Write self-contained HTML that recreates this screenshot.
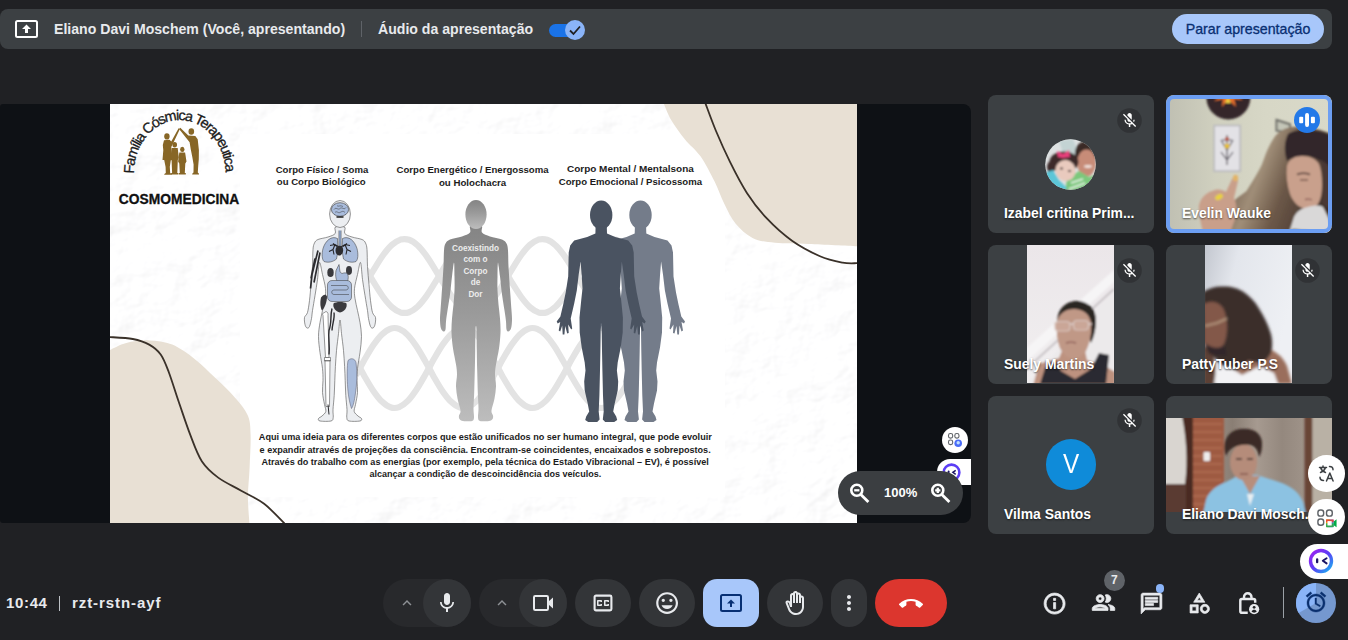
<!DOCTYPE html>
<html lang="pt-BR">
<head>
<meta charset="utf-8">
<title>Meet - rzt-rstn-ayf</title>
<style>
*{box-sizing:border-box;margin:0;padding:0}
html,body{width:1348px;height:640px;overflow:hidden;background:#202124}
body{position:relative;font-family:"Liberation Sans",sans-serif;color:#e8eaed}
.abs{position:absolute}
/* top bar */
#topbar{left:0;top:9px;width:1332px;height:40px;background:#3c4043;border-radius:8px}
#topbar .t{position:absolute;top:0;height:40px;line-height:41px;font-size:14.1px;font-weight:bold;color:#e8eaed;white-space:nowrap}
#stopbtn{left:1172px;top:14px;width:152px;height:30px;border-radius:15px;background:#a8c7fa;color:#082f72;font-size:14.2px;-webkit-text-stroke:.3px #082f72;line-height:30px;text-align:center;white-space:nowrap}
/* presentation */
#pres{left:0;top:104px;width:971px;height:419px;background:#0e1115;border-radius:3px 8px 8px 3px;overflow:hidden}
/* tiles */
.tile{position:absolute;width:166px;height:138.33px;background:#3c4043;border-radius:8px;overflow:hidden}
.tile .nm{position:absolute;left:16px;bottom:12px;line-height:16px;font-size:13.9px;font-weight:bold;color:#fff;white-space:nowrap;text-shadow:0 1px 2px rgba(0,0,0,.6)}
.tile .mute{position:absolute;right:12.5px;top:12.5px}
/* bottom bar */
.btn{position:absolute;top:579px;height:48px;border-radius:24px;background:#333538}
.grp{position:absolute;top:579px;height:48px;border-radius:24px;background:#28292c}
#clock{left:6px;top:593.3px;font-size:15px;letter-spacing:.65px;font-weight:bold;color:#e8eaed;line-height:20px;white-space:nowrap}
</style>
</head>
<body>

<!-- TOP BAR -->
<div id="topbar" class="abs">
  <svg class="abs" style="left:15px;top:11px" width="24" height="18" viewBox="0 0 24 18"><rect x="1" y="1" width="21" height="16" rx="1.5" fill="none" stroke="#fff" stroke-width="2"/><path d="M11.5 4.5 L7 9 H10 V13 H13 V9 H16 Z" fill="#fff"/></svg>
  <span class="t" id="t1" style="left:54px">Eliano Davi Moschem (Você, apresentando)</span>
  <div class="abs" style="left:361px;top:12px;width:1px;height:16px;background:#5f6368"></div>
  <span class="t" id="t2" style="left:378px">Áudio da apresentação</span>
  <div class="abs" style="left:549px;top:15px;width:34px;height:13px;border-radius:7px;background:#1a73e8"></div>
  <div class="abs" style="left:565px;top:11px;width:20px;height:20px;border-radius:10px;background:#8ab4f8"></div>
  <svg class="abs" style="left:565px;top:11px" width="20" height="20" viewBox="0 0 20 20"><path d="M5 10.5 L8.5 14 L15 6.5" fill="none" stroke="#202124" stroke-width="1.8"/></svg>
</div>
<div id="stopbtn" class="abs">Parar apresentação</div>

<!-- PRESENTATION -->
<div id="pres" class="abs">
<svg id="slide" class="abs" style="left:0;top:0" width="971" height="419" viewBox="0 104 971 419" font-family="'Liberation Sans',sans-serif">
<!--slide_bg_START-->
<defs>
<linearGradient id="gbody" x1="0" y1="0" x2="0" y2="1"><stop offset="0" stop-color="#848484"/><stop offset=".45" stop-color="#9a9a9a"/><stop offset="1" stop-color="#bdbdbd"/></linearGradient>
<filter id="pf" x="-20%" y="-20%" width="140%" height="140%"><feGaussianBlur stdDeviation="9"/></filter>
<clipPath id="slc"><rect x="110" y="104" width="747" height="419"/></clipPath>
<g id="man"><ellipse cx="0" cy="14.5" rx="11.2" ry="14.5"/><path d="M-5.6,26.0L-5.8,33.0L-14.0,36.5L-27.0,40.0L-31.0,45.0L-32.5,52.0L-33.0,76.0L-35.5,92.0L-38.0,104.0L-40.8,116.0L-44.5,121.0L-43.5,123.0L-41.0,121.5L-42.5,130.0L-41.0,131.0L-39.0,125.0L-38.5,134.0L-36.8,134.0L-36.0,125.5L-34.0,133.0L-32.5,132.5L-33.0,124.0L-30.0,129.0L-29.0,128.0L-30.5,118.0L-27.0,103.0L-24.4,90.0L-22.5,74.0L-20.6,61.0L-19.5,75.0L-18.7,88.0L-20.0,100.0L-21.7,117.0L-21.5,132.0L-19.5,147.0L-16.5,162.0L-15.7,170.0L-17.0,181.0L-16.5,190.0L-13.5,203.0L-12.0,211.0L-15.0,216.0L-16.0,219.5L-13.0,221.5L-4.0,221.5L-1.6,219.0L-2.5,211.0L-1.8,195.0L-1.2,170.0L-0.8,150.0L-0.4,123.0L0.4,123.0L0.8,150.0L1.2,170.0L1.8,195.0L2.5,211.0L1.6,219.0L4.0,221.5L13.0,221.5L16.0,219.5L15.0,216.0L12.0,211.0L13.5,203.0L16.5,190.0L17.0,181.0L15.7,170.0L16.5,162.0L19.5,147.0L21.5,132.0L21.7,117.0L20.0,100.0L18.7,88.0L19.5,75.0L20.6,61.0L22.5,74.0L24.4,90.0L27.0,103.0L30.5,118.0L29.0,128.0L30.0,129.0L33.0,124.0L32.5,132.5L34.0,133.0L36.0,125.5L36.8,134.0L38.5,134.0L39.0,125.0L41.0,131.0L42.5,130.0L41.0,121.5L43.5,123.0L44.5,121.0L40.8,116.0L38.0,104.0L35.5,92.0L33.0,76.0L32.5,52.0L31.0,45.0L27.0,40.0L14.0,36.5L5.8,33.0L5.6,26.0Z"/></g>
</defs>
<g clip-path="url(#slc)">
<rect x="110" y="104" width="747" height="419" fill="#fcfcfc"/>
<filter id="paper" x="0" y="0" width="100%" height="100%"><feTurbulence type="fractalNoise" baseFrequency="0.022 0.028" numOctaves="4" seed="7" result="n"/><feDiffuseLighting in="n" lighting-color="#ffffff" surfaceScale="2.6" diffuseConstant="1.18"><feDistantLight azimuth="40" elevation="58"/></feDiffuseLighting><feColorMatrix type="matrix" values=".5 0 0 0 .5  0 .5 0 0 .5  0 0 .5 0 .505  0 0 0 1 0"/></filter>
<rect x="110" y="104" width="747" height="419" fill="#fff" filter="url(#paper)"/>
<rect x="240" y="134" width="485" height="363" fill="#fff"/>
<path d="M663.9,104.0C665.1,106.6 667.5,113.8 671.0,119.7C674.5,125.6 680.1,133.3 685.0,139.4C689.9,145.5 695.6,149.3 700.5,156.3C705.4,163.3 710.6,173.6 714.6,181.6C718.6,189.6 720.9,197.1 724.4,204.1C727.9,211.1 731.0,218.2 735.7,223.8C740.4,229.4 746.0,234.7 752.5,237.9C759.0,241.1 765.6,241.8 775.0,242.8C784.4,243.8 795.1,243.4 808.8,244.0C822.5,244.6 849.0,245.9 857.0,246.3L857,104Z" fill="#e8e0d4"/>
<path d="M110.0,350.0C112.7,348.8 119.8,344.6 126.3,343.0C132.8,341.4 141.5,340.1 149.2,340.4C156.8,340.7 164.5,341.4 172.2,344.6C179.9,347.8 188.1,353.9 195.2,359.4C202.3,364.9 208.3,371.2 214.9,377.5C221.5,383.8 229.1,390.9 234.6,397.2C240.1,403.5 245.0,408.9 247.7,415.2C250.4,421.5 250.3,426.1 250.6,434.9C250.9,443.6 250.0,457.3 249.6,467.7C249.2,478.1 247.9,488.1 247.9,497.3C247.9,506.5 249.2,518.6 249.4,522.9L110,523Z" fill="#e8e0d4"/>
<path d="M705.3,103.0C707.1,107.7 711.9,121.2 716.0,131.0C720.1,140.8 724.9,151.6 730.0,161.9C735.1,172.2 740.8,183.5 746.9,192.9C753.0,202.3 759.1,210.2 766.6,218.2C774.1,226.2 783.1,234.4 792.0,240.7C800.9,247.0 811.6,252.5 820.0,256.2C828.4,259.9 836.4,261.4 842.6,262.6C848.8,263.8 854.6,263.1 857.0,263.2" fill="none" stroke="#3a3129" stroke-width="1.8"/>
<path d="M109.0,337.0C113.0,337.3 126.1,337.7 132.8,339.0C139.5,340.3 144.5,342.0 149.2,344.6C153.8,347.2 157.4,349.9 160.7,354.5C164.0,359.1 165.9,364.6 168.9,372.5C171.9,380.4 175.2,391.6 178.8,402.0C182.4,412.4 186.5,425.0 190.3,434.9C194.1,444.8 197.2,454.1 201.8,461.2C206.5,468.3 211.6,472.7 218.2,477.6C224.8,482.5 233.5,486.3 241.2,490.7C248.8,495.1 256.9,498.3 264.1,503.8C271.3,509.3 281.1,520.2 284.5,523.5" fill="none" stroke="#3a3129" stroke-width="1.8"/>
<g fill="none" stroke="#e3e3e3" stroke-width="6.2">
<path d="M366.0,269.3C367.4,271.7 371.8,279.1 374.6,283.7C377.5,288.3 380.4,293.1 383.2,297.0C386.1,300.9 389.0,304.5 391.9,307.1C394.8,309.6 397.6,311.5 400.5,312.4C403.4,313.2 406.2,313.2 409.1,312.2C412.0,311.2 414.9,309.1 417.8,306.5C420.6,303.8 423.5,300.1 426.4,296.1C429.2,292.2 432.1,287.3 435.0,282.7C437.9,278.1 440.8,272.9 443.6,268.3C446.5,263.7 449.4,258.9 452.2,255.0C455.1,251.1 458.0,247.5 460.9,244.9C463.8,242.4 466.6,240.5 469.5,239.6C472.4,238.8 475.2,238.8 478.1,239.8C481.0,240.8 483.9,242.9 486.8,245.5C489.6,248.2 492.5,251.9 495.4,255.9C498.2,259.8 501.1,264.7 504.0,269.3C506.9,273.9 509.8,279.1 512.6,283.7C515.5,288.3 518.4,293.1 521.2,297.0C524.1,300.9 527.0,304.5 529.9,307.1C532.8,309.6 535.6,311.5 538.5,312.4C541.4,313.2 544.2,313.2 547.1,312.2C550.0,311.2 552.9,309.1 555.8,306.5C558.6,303.8 561.5,300.1 564.4,296.1C567.2,292.2 570.1,287.3 573.0,282.7C575.9,278.1 578.8,272.9 581.6,268.3C584.5,263.7 587.4,258.9 590.2,255.0C593.1,251.1 596.0,247.5 598.9,244.9C601.8,242.4 604.6,240.5 607.5,239.6C610.4,238.8 613.2,238.8 616.1,239.8C619.0,240.8 621.9,242.9 624.8,245.5C627.6,248.2 630.5,251.9 633.4,255.9C636.2,259.8 640.6,267.1 642.0,269.3"/>
<path d="M366.0,282.7C367.4,280.3 371.8,272.9 374.6,268.3C377.5,263.7 380.4,258.9 383.2,255.0C386.1,251.1 389.0,247.5 391.9,244.9C394.8,242.4 397.6,240.5 400.5,239.6C403.4,238.8 406.2,238.8 409.1,239.8C412.0,240.8 414.9,242.9 417.8,245.5C420.6,248.2 423.5,251.9 426.4,255.9C429.2,259.8 432.1,264.7 435.0,269.3C437.9,273.9 440.8,279.1 443.6,283.7C446.5,288.3 449.4,293.1 452.2,297.0C455.1,300.9 458.0,304.5 460.9,307.1C463.8,309.6 466.6,311.5 469.5,312.4C472.4,313.2 475.2,313.2 478.1,312.2C481.0,311.2 483.9,309.1 486.8,306.5C489.6,303.8 492.5,300.1 495.4,296.1C498.2,292.2 501.1,287.3 504.0,282.7C506.9,278.1 509.8,272.9 512.6,268.3C515.5,263.7 518.4,258.9 521.2,255.0C524.1,251.1 527.0,247.5 529.9,244.9C532.8,242.4 535.6,240.5 538.5,239.6C541.4,238.8 544.2,238.8 547.1,239.8C550.0,240.8 552.9,242.9 555.8,245.5C558.6,248.2 561.5,251.9 564.4,255.9C567.2,259.8 570.1,264.7 573.0,269.3C575.9,273.9 578.8,279.1 581.6,283.7C584.5,288.3 587.4,293.1 590.2,297.0C593.1,300.9 596.0,304.5 598.9,307.1C601.8,309.6 604.6,311.5 607.5,312.4C610.4,313.2 613.2,313.2 616.1,312.2C619.0,311.2 621.9,309.1 624.8,306.5C627.6,303.8 630.5,300.1 633.4,296.1C636.2,292.2 640.6,284.9 642.0,282.7"/>
<path d="M356.0,360.8C357.4,363.4 361.8,371.4 364.6,376.4C367.5,381.4 370.4,386.5 373.2,390.7C376.1,394.9 379.0,398.8 381.9,401.6C384.8,404.3 387.6,406.4 390.5,407.3C393.4,408.3 396.2,408.2 399.1,407.1C402.0,406.0 404.9,403.8 407.8,400.9C410.6,398.0 413.5,394.0 416.4,389.7C419.2,385.5 422.1,380.3 425.0,375.2C427.9,370.2 430.8,364.6 433.6,359.6C436.5,354.6 439.4,349.5 442.2,345.3C445.1,341.1 448.0,337.2 450.9,334.4C453.8,331.7 456.6,329.6 459.5,328.7C462.4,327.7 465.2,327.8 468.1,328.9C471.0,330.0 473.9,332.2 476.8,335.1C479.6,338.0 482.5,342.0 485.4,346.3C488.2,350.5 491.1,355.7 494.0,360.8C496.9,365.8 499.8,371.4 502.6,376.4C505.5,381.4 508.4,386.5 511.2,390.7C514.1,394.9 517.0,398.8 519.9,401.6C522.8,404.3 525.6,406.4 528.5,407.3C531.4,408.3 534.2,408.2 537.1,407.1C540.0,406.0 542.9,403.8 545.8,400.9C548.6,398.0 551.5,394.0 554.4,389.7C557.2,385.5 560.1,380.3 563.0,375.2C565.9,370.2 568.8,364.6 571.6,359.6C574.5,354.6 577.4,349.5 580.2,345.3C583.1,341.1 586.0,337.2 588.9,334.4C591.8,331.7 594.6,329.6 597.5,328.7C600.4,327.7 603.2,327.8 606.1,328.9C609.0,330.0 611.9,332.2 614.8,335.1C617.6,338.0 620.5,342.0 623.4,346.3C626.2,350.5 630.6,358.3 632.0,360.8"/>
<path d="M356.0,375.2C357.4,372.6 361.8,364.6 364.6,359.6C367.5,354.6 370.4,349.5 373.2,345.3C376.1,341.1 379.0,337.2 381.9,334.4C384.8,331.7 387.6,329.6 390.5,328.7C393.4,327.7 396.2,327.8 399.1,328.9C402.0,330.0 404.9,332.2 407.8,335.1C410.6,338.0 413.5,342.0 416.4,346.3C419.2,350.5 422.1,355.7 425.0,360.8C427.9,365.8 430.8,371.4 433.6,376.4C436.5,381.4 439.4,386.5 442.2,390.7C445.1,394.9 448.0,398.8 450.9,401.6C453.8,404.3 456.6,406.4 459.5,407.3C462.4,408.3 465.2,408.2 468.1,407.1C471.0,406.0 473.9,403.8 476.8,400.9C479.6,398.0 482.5,394.0 485.4,389.7C488.2,385.5 491.1,380.3 494.0,375.2C496.9,370.2 499.8,364.6 502.6,359.6C505.5,354.6 508.4,349.5 511.2,345.3C514.1,341.1 517.0,337.2 519.9,334.4C522.8,331.7 525.6,329.6 528.5,328.7C531.4,327.7 534.2,327.8 537.1,328.9C540.0,330.0 542.9,332.2 545.8,335.1C548.6,338.0 551.5,342.0 554.4,346.3C557.2,350.5 560.1,355.7 563.0,360.8C565.9,365.8 568.8,371.4 571.6,376.4C574.5,381.4 577.4,386.5 580.2,390.7C583.1,394.9 586.0,398.8 588.9,401.6C591.8,404.3 594.6,406.4 597.5,407.3C600.4,408.3 603.2,408.2 606.1,407.1C609.0,406.0 611.9,403.8 614.8,400.9C617.6,398.0 620.5,394.0 623.4,389.7C626.2,385.5 630.6,377.7 632.0,375.2"/>
</g>
</g>
<!--slide_bg_END-->
<!--slide_fg_START-->
<g transform="translate(340,200.5)">
<g fill="#eceef1" stroke="#5c5c5c" stroke-width=".65" stroke-linejoin="round">
<path d="M-4.6,26.5C-6.2,27.6 -3.6,31.3 -4.8,33.0C-6.0,34.7 -9.1,35.5 -12.0,36.5C-14.9,37.5 -19.8,38.0 -22.0,39.0C-24.2,40.0 -24.7,40.8 -25.5,42.5C-26.3,44.2 -26.7,45.1 -27.0,49.0C-27.3,52.9 -27.2,60.2 -27.5,66.0C-27.8,71.8 -28.5,78.3 -29.0,84.0C-29.5,89.7 -29.9,95.3 -30.5,100.0C-31.1,104.7 -31.7,109.2 -32.5,112.0C-33.3,114.8 -35.1,115.0 -35.5,117.0C-35.9,119.0 -35.4,122.2 -35.0,124.0C-34.6,125.8 -33.8,127.2 -33.0,127.5C-32.2,127.8 -31.2,127.6 -30.5,126.0C-29.8,124.4 -29.0,120.7 -28.5,118.0C-28.0,115.3 -28.1,113.8 -27.5,110.0C-26.9,106.2 -25.8,100.2 -25.0,95.0C-24.2,89.8 -23.2,84.5 -22.5,79.0C-21.8,73.5 -21.3,62.8 -20.5,62.0C-19.7,61.2 -18.5,69.7 -17.5,74.0C-16.5,78.3 -14.9,84.0 -14.5,88.0C-14.1,92.0 -14.5,94.3 -15.0,98.0C-15.5,101.7 -16.7,106.0 -17.5,110.0C-18.3,114.0 -19.3,117.7 -20.0,122.0C-20.7,126.3 -21.5,131.0 -21.5,136.0C-21.5,141.0 -20.7,146.7 -20.0,152.0C-19.3,157.3 -18.0,163.3 -17.5,168.0C-17.0,172.7 -17.0,176.0 -17.0,180.0C-17.0,184.0 -17.8,188.0 -17.5,192.0C-17.2,196.0 -16.1,200.8 -15.5,204.0C-14.9,207.2 -13.8,209.1 -14.2,211.0C-14.6,212.9 -16.8,214.3 -18.0,215.5C-19.2,216.7 -21.2,217.2 -21.5,218.0C-21.8,218.8 -22.1,220.1 -20.0,220.5C-17.9,220.9 -11.2,221.1 -9.0,220.5C-6.8,219.9 -7.1,218.9 -6.8,217.0C-6.5,215.1 -7.2,212.7 -7.0,209.0C-6.8,205.3 -6.1,199.8 -5.8,195.0C-5.5,190.2 -5.4,184.8 -5.2,180.0C-5.0,175.2 -4.9,171.0 -4.6,166.0C-4.3,161.0 -4.0,155.5 -3.5,150.0C-3.0,144.5 -2.0,137.8 -1.5,133.0C-1.0,128.2 -0.7,123.0 -0.4,121.0C-0.1,119.0 0.1,119.0 0.4,121.0C0.7,123.0 1.0,128.2 1.5,133.0C2.0,137.8 3.0,144.5 3.5,150.0C4.0,155.5 4.3,161.0 4.6,166.0C4.9,171.0 5.0,175.2 5.2,180.0C5.4,184.8 5.5,190.2 5.8,195.0C6.1,199.8 6.8,205.3 7.0,209.0C7.2,212.7 6.5,215.1 6.8,217.0C7.1,218.9 6.8,219.9 9.0,220.5C11.2,221.1 17.9,220.9 20.0,220.5C22.1,220.1 21.8,218.8 21.5,218.0C21.2,217.2 19.2,216.7 18.0,215.5C16.8,214.3 14.6,212.9 14.2,211.0C13.8,209.1 14.9,207.2 15.5,204.0C16.1,200.8 17.2,196.0 17.5,192.0C17.8,188.0 17.0,184.0 17.0,180.0C17.0,176.0 17.0,172.7 17.5,168.0C18.0,163.3 19.3,157.3 20.0,152.0C20.7,146.7 21.5,141.0 21.5,136.0C21.5,131.0 20.7,126.3 20.0,122.0C19.3,117.7 18.3,114.0 17.5,110.0C16.7,106.0 15.5,101.7 15.0,98.0C14.5,94.3 14.1,92.0 14.5,88.0C14.9,84.0 16.5,78.3 17.5,74.0C18.5,69.7 19.7,61.2 20.5,62.0C21.3,62.8 21.8,73.5 22.5,79.0C23.2,84.5 24.2,89.8 25.0,95.0C25.8,100.2 26.9,106.2 27.5,110.0C28.1,113.8 28.0,115.3 28.5,118.0C29.0,120.7 29.8,124.4 30.5,126.0C31.2,127.6 32.2,127.8 33.0,127.5C33.8,127.2 34.6,125.8 35.0,124.0C35.4,122.2 35.9,119.0 35.5,117.0C35.1,115.0 33.3,114.8 32.5,112.0C31.7,109.2 31.1,104.7 30.5,100.0C29.9,95.3 29.5,89.7 29.0,84.0C28.5,78.3 27.8,71.8 27.5,66.0C27.2,60.2 27.3,52.9 27.0,49.0C26.7,45.1 26.3,44.2 25.5,42.5C24.7,40.8 24.2,40.0 22.0,39.0C19.8,38.0 14.9,37.5 12.0,36.5C9.1,35.5 6.0,34.7 4.8,33.0C3.6,31.3 6.2,27.6 4.6,26.5C3.0,25.4 -3.0,25.4 -4.6,26.5Z"/>
<ellipse cx="0" cy="13.5" rx="10.4" ry="13.5"/>
</g>
<ellipse cx="0" cy="9" rx="8.6" ry="6.8" fill="#a9bcdc" stroke="#333" stroke-width=".6"/>
<path d="M-6,9c2,-3 4,1 6,-1s4,2 6,-1M-5,12c2,-2 3,1 5,0s3,-2 5,0M-3,5c1,2 3,-1 6,1" fill="none" stroke="#333" stroke-width=".5"/>
<path d="M-3.5,16.5h7" stroke="#222" stroke-width="1.6"/>
<path d="M0,30V50" stroke="#8fa5c8" stroke-width="2.2"/><path d="M-1.2,30V48M1.2,30V48" stroke="#333" stroke-width=".4"/>
<path d="M-2.5,38c-6,-3 -12,2 -14.5,10c-1.5,6 -1,11 1,13c4,1.5 9,0.5 12.5,-2.5c1.5,-6 1.5,-13 1,-18.500z" fill="#a9bcdc" stroke="#333" stroke-width=".5"/>
<path d="M2.500,38c6,-3 12,2 14.500,10c1.500,6 1,11 -1,13c-4,1.500 -9,0.500 -12.500,-2.500c-1.500,-6 -1.500,-13 -1,-18.500z" fill="#a9bcdc" stroke="#333" stroke-width=".5"/>
<path d="M0,47l-5,-3l-5,1M-5,44l-2,5l-4,2M-7,49l1,5M0,47l5,-3l5,1M5,44l2,5l4,2M7,49l-1,5M-3,46l-4,-3M3,46l4,-3" fill="none" stroke="#26262a" stroke-width="1.1"/>
<path d="M-3,46c3,-2 7,0 6,5c-1,4 -4,5 -6,3c-2,-2 -2,-6 0,-8z" fill="#2c2c30"/>
<ellipse cx="-9.500" cy="72" rx="3.200" ry="4.600" fill="#3a3a3e"/><ellipse cx="9" cy="70" rx="3" ry="4.400" fill="#3a3a3e"/>
<path d="M-1,64c1,4 0,8 3,9c5,-2 7,1 6,6c-1,4 -5,6 -9,4c-3,-2 -4,-8 -3,-13z" fill="#a9bcdc" stroke="#333" stroke-width=".5"/>
<rect x="-12.500" y="80" width="24" height="21" rx="4.500" fill="#a9bcdc" stroke="#333" stroke-width=".5"/>
<path d="M-9,85h15c3,0 3,4.500 0,4.500h-12c-3,0 -3,4.500 0,4.500h15" fill="none" stroke="#333" stroke-width=".5"/>
<path d="M-6.500,103c2,-2 11,-2 13,0c1,4 -2,8 -6.500,9c-4.500,-1 -7.500,-5 -6.500,-9z" fill="#3a3a3e"/>
<path d="M-19,97c2,-3 5,-4 6,-1c0,5 -2,11 -5,14c-2,-3 -2,-9 -1,-13z" fill="#3a3a3e"/>
<path d="M-22,50c-2,8 -4,16 -6,24l-1.500,14M-25,58l-4,20M-20,52l-6,30" fill="none" stroke="#2c2c30" stroke-width="1.700"/>
<path d="M-15.500,112c2,-2 4,0 3.500,3l1,42h-3.500l-2.500,-42c-1,-1 0,-3 1.500,-3z" fill="#fff" stroke="#333" stroke-width=".5"/>
<path d="M-15,160h5l-0.500,46h-3.500zM-15.500,157h6v3.500h-6z" fill="#fff" stroke="#333" stroke-width=".5"/>
<path d="M-8,108c-2,8 0,14 -3,22c-1,8 1,14 0,24M-6,112c1,6 -2,12 -2,18" fill="none" stroke="#2c2c30" stroke-width="1.400"/>
<path d="M-12,204l1,10" stroke="#2c2c30" stroke-width="1"/>
<path d="M8,160c3,-3 7,-2 8,2c1.500,10 1,22 -1,34c-1,6 -2,10 -3.500,12c-2,-6 -3.500,-14 -4,-24c-0.500,-8 -0.500,-18 0.500,-24z" fill="#a9bcdc" stroke="#556" stroke-width=".5"/>
</g>
<g transform="translate(476,200.5)" fill="url(#gbody)">
<path d="M-5.5,25.0C-7.4,26.2 -4.6,30.2 -6.0,32.0C-7.4,33.8 -10.7,34.8 -14.0,36.0C-17.3,37.2 -23.2,37.8 -26.0,39.0C-28.8,40.2 -29.5,41.2 -30.5,43.0C-31.5,44.8 -31.7,46.2 -32.0,50.0C-32.3,53.8 -32.2,60.7 -32.5,66.0C-32.8,71.3 -33.2,77.0 -33.5,82.0C-33.8,87.0 -34.2,91.3 -34.5,96.0C-34.8,100.7 -35.2,106.0 -35.5,110.0C-35.8,114.0 -36.1,117.0 -36.0,120.0C-35.9,123.0 -35.6,126.2 -35.0,128.0C-34.4,129.8 -33.2,130.8 -32.5,131.0C-31.8,131.2 -30.9,130.7 -30.5,129.0C-30.1,127.3 -30.3,124.2 -30.0,121.0C-29.7,117.8 -29.2,114.5 -28.5,110.0C-27.8,105.5 -26.8,99.7 -26.0,94.0C-25.2,88.3 -24.7,81.3 -24.0,76.0C-23.3,70.7 -22.4,62.0 -22.0,62.0C-21.6,62.0 -21.6,71.3 -21.5,76.0C-21.4,80.7 -21.3,85.3 -21.5,90.0C-21.7,94.7 -22.1,99.3 -22.5,104.0C-22.9,108.7 -23.7,113.3 -24.0,118.0C-24.3,122.7 -24.7,127.0 -24.5,132.0C-24.3,137.0 -23.8,142.7 -23.0,148.0C-22.2,153.3 -20.7,159.7 -20.0,164.0C-19.3,168.3 -19.0,170.3 -19.0,174.0C-19.0,177.7 -20.1,182.0 -20.0,186.0C-19.9,190.0 -19.2,194.0 -18.5,198.0C-17.8,202.0 -15.8,207.2 -15.5,210.0C-15.2,212.8 -16.8,213.6 -17.0,215.0C-17.2,216.4 -17.2,217.6 -16.5,218.5C-15.8,219.4 -15.1,220.2 -13.0,220.5C-10.9,220.8 -5.8,221.1 -4.0,220.5C-2.2,219.9 -2.2,219.1 -2.0,217.0C-1.8,214.9 -2.5,212.2 -2.5,208.0C-2.5,203.8 -2.0,198.3 -1.8,192.0C-1.6,185.7 -1.4,177.0 -1.2,170.0C-1.0,163.0 -0.9,157.0 -0.8,150.0C-0.7,143.0 -0.6,131.7 -0.4,128.0C-0.2,124.3 0.2,124.3 0.4,128.0C0.6,131.7 0.7,143.0 0.8,150.0C0.9,157.0 1.0,163.0 1.2,170.0C1.4,177.0 1.6,185.7 1.8,192.0C2.0,198.3 2.5,203.8 2.5,208.0C2.5,212.2 1.8,214.9 2.0,217.0C2.2,219.1 2.2,219.9 4.0,220.5C5.8,221.1 10.9,220.8 13.0,220.5C15.1,220.2 15.8,219.4 16.5,218.5C17.2,217.6 17.2,216.4 17.0,215.0C16.8,213.6 15.2,212.8 15.5,210.0C15.8,207.2 17.8,202.0 18.5,198.0C19.2,194.0 19.9,190.0 20.0,186.0C20.1,182.0 19.0,177.7 19.0,174.0C19.0,170.3 19.3,168.3 20.0,164.0C20.7,159.7 22.2,153.3 23.0,148.0C23.8,142.7 24.3,137.0 24.5,132.0C24.7,127.0 24.3,122.7 24.0,118.0C23.7,113.3 22.9,108.7 22.5,104.0C22.1,99.3 21.7,94.7 21.5,90.0C21.3,85.3 21.4,80.7 21.5,76.0C21.6,71.3 21.6,62.0 22.0,62.0C22.4,62.0 23.3,70.7 24.0,76.0C24.7,81.3 25.2,88.3 26.0,94.0C26.8,99.7 27.8,105.5 28.5,110.0C29.2,114.5 29.7,117.8 30.0,121.0C30.3,124.2 30.1,127.3 30.5,129.0C30.9,130.7 31.8,131.2 32.5,131.0C33.2,130.8 34.4,129.8 35.0,128.0C35.6,126.2 35.9,123.0 36.0,120.0C36.1,117.0 35.8,114.0 35.5,110.0C35.2,106.0 34.8,100.7 34.5,96.0C34.2,91.3 33.8,87.0 33.5,82.0C33.2,77.0 32.8,71.3 32.5,66.0C32.2,60.7 32.3,53.8 32.0,50.0C31.7,46.2 31.5,44.8 30.5,43.0C29.5,41.2 28.8,40.2 26.0,39.0C23.2,37.8 17.3,37.2 14.0,36.0C10.7,34.8 7.4,33.8 6.0,32.0C4.6,30.2 7.4,26.2 5.5,25.0C3.6,23.8 -3.6,23.8 -5.5,25.0Z"/>
<ellipse cx="0" cy="14" rx="10.600" ry="14.500"/>
</g>
<g font-size="8.2" font-weight="bold" fill="#ececec" text-anchor="middle">
<text x="475.5" y="250.6">Coexistindo</text>
<text x="475.5" y="262.1">com o</text>
<text x="475.5" y="273.6">Corpo</text>
<text x="475.5" y="285.1">de</text>
<text x="475.5" y="296.6">Dor</text>
</g>
<use href="#man" x="640.5" y="200.5" fill="#747c8a"/>
<use href="#man" x="601.2" y="200.5" fill="#4a5361"/>
<g font-weight="bold" font-size="9.7" fill="#1c1c1c">
<text x="275.7" y="172.8" textLength="92.6" lengthAdjust="spacingAndGlyphs">Corpo Físico / Soma</text>
<text x="276.8" y="185.4" textLength="88.9" lengthAdjust="spacingAndGlyphs">ou Corpo Biológico</text>
<text x="396.5" y="173.2" textLength="152.1" lengthAdjust="spacingAndGlyphs">Corpo Energético / Energossoma</text>
<text x="438.9" y="186.2" textLength="67.3" lengthAdjust="spacingAndGlyphs">ou Holochacra</text>
<text x="567.0" y="172.3" textLength="126.8" lengthAdjust="spacingAndGlyphs">Corpo Mental / Mentalsona</text>
<text x="558.8" y="185.2" textLength="143.2" lengthAdjust="spacingAndGlyphs">Corpo Emocional / Psicossoma</text>
<text x="258.8" y="440.2" textLength="453.0" lengthAdjust="spacingAndGlyphs">Aqui uma ideia para os diferentes corpos que estão unificados no ser humano integral, que pode evoluir</text>
<text x="259.6" y="452.6" textLength="451.1" lengthAdjust="spacingAndGlyphs">e expandir através de projeções da consciência. Encontram-se coincidentes, encaixados e sobrepostos.</text>
<text x="261.4" y="464.9" textLength="447.4" lengthAdjust="spacingAndGlyphs">Através do trabalho com as energias (por exemplo, pela técnica do Estado Vibracional – EV), é possível</text>
<text x="369.5" y="476.9" textLength="231.7" lengthAdjust="spacingAndGlyphs">alcançar a condição de descoincidência dos veículos.</text>
</g>
<path id="arc" d="M133.8,173.8A45.8,53.600 0 0 1 225.600,173.800" fill="none"/>
<text font-size="14.4" fill="#1a1a1a" stroke="#1a1a1a" stroke-width=".3"><textPath href="#arc" textLength="155" lengthAdjust="spacing">Família Cósmica Terapeutica</textPath></text>
<text x="118.8" y="204" font-size="14.3" font-weight="bold" fill="#111" stroke="#111" stroke-width=".3" textLength="120.500" lengthAdjust="spacingAndGlyphs">COSMOMEDICINA</text>
<g fill="#876626">
<ellipse cx="166.900" cy="136.400" rx="2.700" ry="3.100"/>
<path d="M164,140.200l5.500,-0.400l1.800,1.600l7.300,-13.200l1.300,0.900l-7,14.600l-1.600,3.400l0.500,6l1.200,6.800l-2.200,0.300l-1,6.500l0.400,6.200l1.600,1v0.900h-7.500v-0.900l1.500,-1l-0.200,-6l-1.400,-6.800l-1.700,-0.200l0.800,-9.600l-0.500,-5.400z"/>
<ellipse cx="191.300" cy="131.500" rx="2.800" ry="3.300"/>
<path d="M188.300,135.600l7,0.300l2.400,3.400l1.200,10.600l-0.100,9.400l-0.600,6.600l-0.400,6.500l1.200,1.300v0.900h-6.800v-0.900l1.300,-1.200l0.100,-8l-1.300,-7.600l-1.600,-7.800l-1.100,-6.800l-10.500,-13.400l1.200,-1.100z"/>
<ellipse cx="174.700" cy="144.700" rx="2.300" ry="2.700"/><path d="M171.700,148h6l1.100,9.500l-1,2.500l-0.500,13h1v1.600h-7.200v-1.600h1l-0.500,-13l-1,-2.500z"/>
<ellipse cx="182.300" cy="149.400" rx="2.200" ry="2.600"/><path d="M179.300,152.600h5.800l1.400,9l-1.200,1.800l-0.500,9.600h1v1.600h-7v-1.600h1l-0.500,-9.600l-1.200,-1.800z"/>
</g>
<!--slide_fg_END-->
</svg>
<!--presov_START-->
<div class="abs" style="left:942px;top:323.300px;width:26px;height:26px;border-radius:50%;background:#fff"></div>
<svg class="abs" style="left:946.500px;top:328px" width="17" height="17" viewBox="0 0 17 17"><g fill="none" stroke="#5f6368" stroke-width="1.100"><rect x="1.500" y="1.500" width="4.200" height="4.600" rx="1.900"/><rect x="7.800" y="1.500" width="4.200" height="4.600" rx="1.900"/><rect x="1.500" y="8" width="4.200" height="4.600" rx="1.900"/></g><circle cx="11.200" cy="11.200" r="3.800" fill="#4a6cf7"/><circle cx="11.200" cy="10.800" r="1.700" fill="#bfe0ff"/></svg>
<div class="abs" style="left:936.500px;top:355.200px;width:40px;height:26px;border-radius:13px 0 0 0;background:#fff"></div>
<svg class="abs" style="left:941px;top:357.500px" width="21" height="21" viewBox="0 0 28 28"><circle cx="14" cy="14" r="10.500" fill="#fff" stroke="#5b3df5" stroke-width="3.400"/><rect x="9" y="11.300" width="2.300" height="5" rx="1.100" fill="#1b1464"/><path d="M19.600 11.200l-3.800 2.600 3.800 2.600" fill="none" stroke="#1b1464" stroke-width="1.900"/></svg>
<div class="abs" style="left:838px;top:367px;width:125px;height:44px;border-radius:22px;background:#3b3e41"></div>
<svg class="abs" style="left:848px;top:377px" width="24" height="24" viewBox="0 0 24 24"><circle cx="8.800" cy="9.300" r="5.500" fill="none" stroke="#fff" stroke-width="2.600"/><path d="M12.800 13.500l7.600 7.600" stroke="#fff" stroke-width="2.800"/><path d="M6.200 9.300h5.200" stroke="#fff" stroke-width="2.300"/></svg>
<div class="abs" id="zp" style="left:884px;top:380.500px;font-size:13px;font-weight:bold;color:#fff;line-height:16px;letter-spacing:0">100%</div>
<svg class="abs" style="left:929px;top:377px" width="24" height="24" viewBox="0 0 24 24"><circle cx="8.800" cy="9.300" r="5.500" fill="none" stroke="#fff" stroke-width="2.600"/><path d="M12.800 13.500l7.600 7.600" stroke="#fff" stroke-width="2.800"/><path d="M6.200 9.300h5.200M8.800 6.700v5.200" stroke="#fff" stroke-width="2.300"/></svg>
<!--presov_END-->
</div>

<!-- TILES -->
<div class="tile" id="tl1" style="left:988px;top:95px">
<!--tile1_START-->
<svg class="abs" style="left:57px;top:43.600px" width="51" height="51" viewBox="0 0 51 51">
<defs><clipPath id="avc"><circle cx="25.500" cy="25.500" r="25.300"/></clipPath><filter id="b1" x="-30%" y="-30%" width="160%" height="160%"><feGaussianBlur stdDeviation="1.100"/></filter></defs>
<g clip-path="url(#avc)"><rect width="51" height="51" fill="#dde1e2"/><g filter="url(#b1)">
<path d="M14,2l14,-2l6,16l-14,4z" fill="#c3d3d3"/>
<ellipse cx="41" cy="14" rx="11" ry="12" fill="#3b2b27"/>
<ellipse cx="41.500" cy="24" rx="9.500" ry="13.500" fill="#c78c78"/>
<ellipse cx="43" cy="27.500" rx="4" ry="1.400" fill="#f0e0da"/>
<path d="M20,52l2,-12l12,-8l10,6l6,-2l2,18z" fill="#7cc87c"/>
<path d="M26,44l12,-4M24,50l16,-6" stroke="#e8f4e8" stroke-width="1.600"/>
<ellipse cx="19" cy="23" rx="14.500" ry="10.500" fill="#3e2c2a"/>
<ellipse cx="6" cy="28" rx="4" ry="6" fill="#3e2c2a"/>
<ellipse cx="20.500" cy="31.500" rx="10" ry="10.500" fill="#e9cabe" transform="rotate(-18 20.500 31.500)"/>
<ellipse cx="16.500" cy="29.500" rx="1.700" ry="1" fill="#3a2a2a"/><ellipse cx="24.500" cy="32" rx="1.700" ry="1" fill="#3a2a2a"/>
<path d="M12,12l6,3l6,-4l1,7l-7,1l-5,-1z" fill="#e8407c"/>
<path d="M0,34l8,-3l6,10l8,8l-6,4l-16,-2z" fill="#5cc6d8"/>
</g></g></svg>
<svg class="mute" width="25" height="25" viewBox="-0.500 -0.500 25 25"><circle cx="12" cy="12" r="12.300" fill="#303235"/><g transform="translate(3.300,3.100) scale(.73)" fill="#fff"><path d="M19 11h-1.700c0 .740-.160 1.430-.430 2.050l1.230 1.230c.560-.980.900-2.090.900-3.280zm-4.020.170c0-.060.020-.110.020-.170V5c0-1.660-1.340-3-3-3S9 3.340 9 5v.180l5.980 5.990zM4.270 3L3 4.270l6.010 6.010V11c0 1.660 1.330 3 2.990 3 .220 0 .440-.030.650-.080l1.660 1.660c-.710.330-1.500.520-2.310.520-2.760 0-5.300-2.100-5.300-5.100H5c0 3.410 2.720 6.230 6 6.720V21h2v-3.280c.910-.130 1.770-.450 2.540-.900L19.730 21 21 19.730 4.270 3z"/></g></svg>
<!--tile1_END-->
<div class="nm">Izabel critina Prim...</div></div>
<div class="tile" id="tl2" style="left:1166px;top:95px">
<!--tile2_START-->
<svg class="abs" style="left:0;top:0" width="166" height="138" viewBox="1166 95 166 138">
<defs><filter id="b2" x="-10%" y="-10%" width="120%" height="120%"><feGaussianBlur stdDeviation="1.300"/></filter><filter id="b2b" x="-20%" y="-20%" width="140%" height="140%"><feGaussianBlur stdDeviation="3"/></filter>
<linearGradient id="wall2" x1="0" y1="0" x2="1" y2="0"><stop offset="0" stop-color="#bfbfb2"/><stop offset=".3" stop-color="#d0d0bf"/><stop offset=".6" stop-color="#d7d7c6"/><stop offset="1" stop-color="#d9d9c9"/></linearGradient>
<linearGradient id="hair2" x1="0" y1=".3" x2="1" y2=".7"><stop offset="0" stop-color="#6a5648"/><stop offset=".3" stop-color="#a08e78"/><stop offset=".55" stop-color="#6c5848"/><stop offset="1" stop-color="#3a2c28"/></linearGradient></defs>
<rect x="1166" y="95" width="166" height="138" fill="url(#wall2)"/>
<g filter="url(#b2)">
<circle cx="1228.400" cy="97.500" r="22" fill="#35262a"/>
<path d="M1228,99l-6,8l1,-8l-9,2l8,-6h12l9,5l-9,-1l2,8z" fill="#e8702a"/><path d="M1228,97l-3,6l6,0z" fill="#f0d040"/>
<rect x="1213.400" y="124.700" width="27.500" height="47.300" fill="#b9b9bd"/><rect x="1215" y="126.300" width="24.300" height="44" fill="#e3e2e6"/>
<path d="M1227,135v30M1221,140l6,10l6,-10M1221,152l6,8l6,-8M1222,140h10" stroke="#55505a" stroke-width="1.200" fill="none"/><circle cx="1227" cy="146" r="2.600" fill="#e8c030"/><circle cx="1227" cy="139" r="2" fill="#b84830"/>
<path d="M1275.500,118.500l15.500,5v10l-15.500,-2z" fill="#6e6e68"/><path d="M1277.500,121.500l11.500,3.800v6l-11.500,-1.500z" fill="#c4c6b8"/>
<path d="M1292,127c-8,1 -14,5 -17.500,10c-4,6 -7,12 -9.500,19c-2,6 -4,11 -7,16c-4,7 -7,12 -11.500,19c-5,4 -9,6 -11.500,9c-3,5 -5,10 -5,17l-1,18h104v-100c-12,-6 -28,-9 -41,-8z" fill="url(#hair2)"/>
<path d="M1288,134c8,-6 28,-6 44,2v34c-4,-6 -8,-9 -13,-10c-6,-4 -13,-5 -19,-3c-5,0 -9,1 -13,4c-3,-9 -3,-19 1,-27z" fill="#33272a"/>
<path d="M1287,166c2,-7 8,-10 15,-10c8,0 14,3 17,8c2,5 3,12 3,20c0,9 -1,15 -4,20c-3,4 -8,6 -12,5c-7,-1 -13,-7 -16,-15c-3,-9 -4,-19 -3,-28z" fill="#c9a08c"/>
<path d="M1320,160c4,2 8,6 12,12v36c-4,0 -8,-2 -10,-6c2,-6 2,-14 2,-22c0,-8 -1,-14 -4,-20z" fill="#4a3834"/>
<path d="M1297,174.500c4,-1.500 9,-1.500 13,0" stroke="#4a3430" stroke-width="1.500" fill="none"/><path d="M1305,199.500c3,-.5 5,-.5 7,.5" stroke="#8a5a54" stroke-width="1.300" fill="none"/><path d="M1300,180h8" stroke="#5a4038" stroke-width="1.100"/>
<path d="M1289,233l5,-16c3,-6 8,-9 14,-10c6,-2 12,-2 15,0l6,12l3,14z" fill="#d9d8d8"/>
<path d="M1292,230l26,3" stroke="#222" stroke-width="2.200"/>
<path d="M1203,233c-2,-10 -5,-20 -4,-28c2,-8 8,-13 16,-15c4,-1 8,0 11,2l6,-13c2,-3 6,-2 6,2l-4,17c3,6 3,14 1,21l-5,14z" fill="#c99f8a"/>
<ellipse cx="1219" cy="197" rx="4.200" ry="2.700" fill="#e8d040" transform="rotate(-30 1219 197)"/><ellipse cx="1235.500" cy="178" rx="2.600" ry="3.200" fill="#e2b468"/>
</g>
</svg>
<div class="abs" style="left:0;top:0;width:166px;height:138px;border:4px solid #6c9ef2;border-radius:8px"></div>
<svg class="abs" style="right:12px;top:12px" width="26" height="26" viewBox="0 0 26 26"><circle cx="13" cy="13" r="13" fill="#2379e8"/><g fill="#fff"><rect x="5.200" y="9.700" width="4" height="6.600" rx="1"/><rect x="11.100" y="6" width="3.900" height="14" rx="1.900"/><rect x="16.900" y="9.700" width="4" height="6.600" rx="1"/></g></svg>
<!--tile2_END-->
<div class="nm">Evelin Wauke</div></div>
<div class="tile" id="tl3" style="left:988px;top:245.33px">
<!--tile3_START-->
<svg class="abs" style="left:0;top:0" width="166" height="138" viewBox="988 245 166 138">
<defs><filter id="b3" x="-10%" y="-10%" width="120%" height="120%"><feGaussianBlur stdDeviation="1.200"/></filter><clipPath id="c3"><rect x="1027" y="245" width="87" height="138"/></clipPath>
<linearGradient id="wall3" x1="0" y1="0" x2="0" y2="1"><stop offset="0" stop-color="#ebe6e9"/><stop offset="1" stop-color="#f1eff0"/></linearGradient></defs>
<g clip-path="url(#c3)"><rect x="1027" y="245" width="87" height="138" fill="url(#wall3)"/><g filter="url(#b3)">
<path d="M1114,282l-90,82v20h-4v-30l94,-84z" fill="#f6f5f6"/><path d="M1114,289l-92,84" stroke="#c9c4c7" stroke-width="2" fill="none"/>
<path d="M1114,292v92h-88z" fill="#eceaeb"/>
<path d="M1057.500,322c-1,-12 8,-21 19,-21c12,0 20,8 19.500,20c0,8 -2,16 -5,22l-6,-18l-22,-4z" fill="#2c2524"/>
<path d="M1064,346h20l3,14l18,6l10,6v14h-82l6,-22l20,-6z" fill="#bd927f"/>
<path d="M1057,322c2,-9 9,-13 17,-13c9,0 15,5 17,13c1,10 -1,21 -5,29c-3,5 -8,8 -13,8c-6,-1 -10,-5 -13,-11c-3,-8 -4,-17 -3,-26z" fill="#c09886"/>
<path d="M1054,324h38" stroke="#dccfcc" stroke-width="1.300"/><rect x="1055" y="321.500" width="15" height="9.500" rx="3.500" fill="#caa697" stroke="#d9c6c0" stroke-width="1.200"/><rect x="1073.500" y="320.500" width="15" height="9.500" rx="3.500" fill="#caa697" stroke="#d9c6c0" stroke-width="1.200"/>
<path d="M1066,343c3,-1 7,-1 10,0" stroke="#8a5a54" stroke-width="1.400" fill="none"/>
<path d="M1040,384l5,-16l10,-9l6,12l14,8l16,-10l8,-16l10,2l-3,29z" fill="#2b2a30"/>
</g></g></svg>
<svg class="mute" width="25" height="25" viewBox="-0.500 -0.500 25 25"><circle cx="12" cy="12" r="12.300" fill="#303235"/><g transform="translate(3.300,3.100) scale(.73)" fill="#fff"><path d="M19 11h-1.700c0 .740-.160 1.430-.430 2.050l1.230 1.230c.560-.980.900-2.090.900-3.280zm-4.020.170c0-.060.020-.110.020-.170V5c0-1.660-1.340-3-3-3S9 3.340 9 5v.180l5.980 5.990zM4.270 3L3 4.270l6.010 6.010V11c0 1.660 1.330 3 2.990 3 .220 0 .440-.030.650-.080l1.660 1.660c-.710.330-1.500.520-2.310.520-2.760 0-5.300-2.100-5.300-5.100H5c0 3.410 2.720 6.230 6 6.720V21h2v-3.280c.910-.130 1.770-.450 2.540-.900L19.730 21 21 19.730 4.270 3z"/></g></svg>
<!--tile3_END-->
<div class="nm">Suely Martins</div></div>
<div class="tile" id="tl4" style="left:1166px;top:245.33px">
<!--tile4_START-->
<svg class="abs" style="left:0;top:0" width="166" height="138" viewBox="1166 245 166 138">
<defs><filter id="b4" x="-10%" y="-10%" width="120%" height="120%"><feGaussianBlur stdDeviation="1.500"/></filter><clipPath id="c4"><rect x="1205" y="245" width="87" height="138"/></clipPath>
<linearGradient id="wall4" x1="0" y1="0" x2="1" y2=".4"><stop offset="0" stop-color="#c3c7cf"/><stop offset=".35" stop-color="#e3e6ec"/><stop offset="1" stop-color="#eef0f4"/></linearGradient></defs>
<g clip-path="url(#c4)"><rect x="1205" y="245" width="87" height="138" fill="url(#wall4)"/><g filter="url(#b4)">
<path d="M1260,346c10,2 22,8 27,20l5,18h-60l4,-30z" fill="#9a6e5c"/>
<path d="M1203,346l10,4l4,36h-14z" fill="#5c4034"/>
<path d="M1214,384l2,-13l12,-5l14,9l18,-9l14,7l4,11z" fill="#f2f2f4"/>
<path d="M1203,292c6,-4 13,-6 21,-5.500c8,0 14,2 19,5c7,5 12,10 16,17c5,8 9,16 11.500,24c2,6 2,13 1,19c-2,6 -6,10 -11,11c-5,0 -9,-1 -12,-2c-3,4 -7,8 -12,9c-6,0 -11,-2 -15,-5c-6,-5 -11,-11 -14,-16l-6,-7z" fill="#3a2d2b"/>
<path d="M1204,304c8,-4 16,-2 20,6c4,10 4,24 0,34c-4,6 -12,6 -20,1z" fill="#83594a"/>
<path d="M1205,326l12,-3l10,-4.500" stroke="#d8c0a0" stroke-width="1.200" fill="none"/>
<path d="M1205,343c6,5 13,6 20,3l2,10l-18,-2z" fill="#33282a"/>
</g></g></svg>
<svg class="mute" width="25" height="25" viewBox="-0.500 -0.500 25 25"><circle cx="12" cy="12" r="12.300" fill="#303235"/><g transform="translate(3.300,3.100) scale(.73)" fill="#fff"><path d="M19 11h-1.700c0 .740-.160 1.430-.430 2.050l1.230 1.230c.560-.980.900-2.090.900-3.280zm-4.020.170c0-.060.020-.110.020-.170V5c0-1.660-1.340-3-3-3S9 3.340 9 5v.180l5.980 5.990zM4.270 3L3 4.270l6.010 6.010V11c0 1.660 1.330 3 2.990 3 .220 0 .440-.030.650-.080l1.660 1.660c-.710.330-1.500.520-2.310.520-2.760 0-5.300-2.100-5.300-5.100H5c0 3.410 2.720 6.230 6 6.720V21h2v-3.280c.910-.130 1.770-.450 2.540-.900L19.730 21 21 19.730 4.270 3z"/></g></svg>
<!--tile4_END-->
<div class="nm">PattyTuber P.S</div></div>
<div class="tile" id="tl5" style="left:988px;top:395.67px">
<!--tile5_START-->
<div class="abs" style="left:57.600px;top:43.400px;width:50.600px;height:50.600px;border-radius:50%;background:#0f8bd9;color:#fff;font-size:27px;line-height:51px;text-align:center"><span style="display:inline-block;transform:scaleX(.9)">V</span></div>
<svg class="mute" width="25" height="25" viewBox="-0.500 -0.500 25 25"><circle cx="12" cy="12" r="12.300" fill="#303235"/><g transform="translate(3.300,3.100) scale(.73)" fill="#fff"><path d="M19 11h-1.700c0 .740-.160 1.430-.430 2.050l1.230 1.230c.560-.980.900-2.090.900-3.280zm-4.020.170c0-.060.020-.110.020-.170V5c0-1.660-1.340-3-3-3S9 3.340 9 5v.180l5.980 5.990zM4.270 3L3 4.270l6.010 6.010V11c0 1.660 1.330 3 2.990 3 .220 0 .440-.030.650-.080l1.660 1.660c-.710.330-1.500.520-2.310.520-2.760 0-5.300-2.100-5.300-5.100H5c0 3.410 2.720 6.230 6 6.720V21h2v-3.280c.910-.130 1.770-.450 2.540-.900L19.730 21 21 19.730 4.270 3z"/></g></svg>
<!--tile5_END-->
<div class="nm">Vilma Santos</div></div>
<div class="tile" id="tl6" style="left:1166px;top:395.67px">
<!--tile6_START-->
<svg class="abs" style="left:0;top:0" width="166" height="138" viewBox="1166 396 166 138">
<defs><filter id="b6" x="-10%" y="-10%" width="120%" height="120%"><feGaussianBlur stdDeviation="1.200"/></filter><clipPath id="c6"><rect x="1166" y="418" width="166" height="94"/></clipPath>
<linearGradient id="wood6" x1="0" y1="0" x2="1" y2="0"><stop offset="0" stop-color="#8c7e74"/><stop offset=".2" stop-color="#a4988e"/><stop offset=".4" stop-color="#8a7e74"/><stop offset=".55" stop-color="#a69a90"/><stop offset=".7" stop-color="#94887e"/><stop offset=".85" stop-color="#a0948a"/><stop offset="1" stop-color="#988c82"/></linearGradient></defs>
<g clip-path="url(#c6)"><rect x="1166" y="418" width="166" height="94" fill="url(#wood6)"/><g filter="url(#b6)">
<rect x="1186" y="416" width="38" height="98" fill="#9e5a42"/>
<g stroke="#c08060" stroke-width=".8"><path d="M1190,424h32"/><path d="M1190,432h32"/><path d="M1190,440h32"/><path d="M1190,448h32"/><path d="M1190,456h32"/><path d="M1190,464h32"/><path d="M1190,472h32"/><path d="M1190,480h32"/><path d="M1190,488h32"/><path d="M1190,496h32"/><path d="M1190,504h32"/></g>
<rect x="1180" y="416" width="13" height="98" fill="#4a2c24"/>
<path d="M1164,416h18c4,20 6,44 3,68h-21z" fill="#d9d5d0"/><path d="M1164,484h22v30h-22z" fill="#5a3a30"/>
<rect x="1203.500" y="452" width="6.500" height="9" rx="1" fill="#eee"/>
<rect x="1304.500" y="416" width="8" height="98" fill="#684436"/><rect x="1312.500" y="416" width="21" height="98" fill="#b9b1a5"/>
<path d="M1203,514l3,-14c3,-9 10,-14 20,-18l13,-7h18l22,7c12,4 20,10 24,20l3,12z" fill="#8cc2e2"/>
<path d="M1240,476l10,18l10,-18" fill="#b78e7c"/><path d="M1247,494l3,12l4,-12z" fill="#e8eef2"/>
<ellipse cx="1243.500" cy="462" rx="13.500" ry="18" fill="#b58c7a"/>
<path d="M1236,459h6M1247,459h6" stroke="#3a2a26" stroke-width="1.400"/><path d="M1240,474h8" stroke="#7a4a44" stroke-width="1.200"/>
<path d="M1226,456c-4,-12 0,-25 14,-27c14,-2 23,5 22,16c0,5 -1,9 -3,12c-1,-6 -3,-11 -9,-12c-8,-1 -15,1 -19,4c-3,2 -4,5 -5,7z" fill="#3a2c26"/>
</g></g></svg>
<!--tile6_END-->
<div class="nm">Eliano Davi Mosch...</div></div>

<!-- BOTTOM BAR -->
<div id="clock" class="abs">10:44</div>
<div class="abs" style="left:59px;top:595.500px;width:1px;height:15.500px;background:#bdc1c6"></div>
<div id="code" class="abs" style="left:72px;top:593.3px;font-size:15px;font-weight:bold;line-height:20px;white-space:nowrap;letter-spacing:.92px">rzt-rstn-ayf</div>

<div class="grp" style="left:383px;width:88px"></div>
<div class="btn" style="left:423px;width:48px"></div>
<div class="grp" style="left:479px;width:88px"></div>
<div class="btn" style="left:519px;width:48px"></div>
<div class="btn" style="left:575px;width:56px"></div>
<div class="btn" style="left:639px;width:56px"></div>
<div class="btn" style="left:703px;width:56px;border-radius:14px;background:#a8c7fa"></div>
<div class="btn" style="left:767px;width:56px"></div>
<div class="btn" style="left:831px;width:36px;border-radius:18px"></div>
<div class="btn" style="left:875px;width:72px;background:#dc362e"></div>

<!--bar_START-->
<svg class="abs" style="left:397.6px;top:594.0px" width="18" height="18" viewBox="0 0 24 24" fill="#8e9195"><path d="M12 8l-6 6 1.410 1.410L12 10.830l4.590 4.580L18 14z"/></svg>
<svg class="abs" style="left:435.4px;top:591.3px" width="24" height="24" viewBox="0 0 24 24" fill="#e8eaed"><path d="M12 14c1.660 0 3-1.340 3-3V5c0-1.660-1.340-3-3-3S9 3.340 9 5v6c0 1.660 1.340 3 3 3zm5.300-3c0 3-2.540 5.100-5.300 5.100S6.700 14 6.700 11H5c0 3.410 2.720 6.230 6 6.720V21h2v-3.280c3.280-.480 6-3.300 6-6.720h-1.700z"/></svg>
<svg class="abs" style="left:493.4px;top:594.0px" width="18" height="18" viewBox="0 0 24 24" fill="#8e9195"><path d="M12 8l-6 6 1.410 1.410L12 10.830l4.590 4.580L18 14z"/></svg>
<svg class="abs" style="left:531.0px;top:591.0px" width="24" height="24" viewBox="0 0 24 24" fill="#e8eaed"><rect x="3" y="5" width="14" height="14" rx="1.200" fill="none" stroke="#e8eaed" stroke-width="2"/><path d="M17.500 10.600L22 6.400V17.600L17.500 13.400z"/></svg>
<svg class="abs" style="left:591.0px;top:591.0px" width="24" height="24" viewBox="0 0 24 24" fill="#e8eaed"><rect x="3.600" y="4.600" width="16.800" height="14.800" rx="1.400" fill="none" stroke="#e8eaed" stroke-width="2.100"/><path d="M7 15h3c.550 0 1-.450 1-1v-1H9.500v.500h-2v-3h2v.500H11v-1c0-.550-.450-1-1-1H7c-.550 0-1 .450-1 1v4c0 .550.450 1 1 1zm7 0h3c.550 0 1-.450 1-1v-1h-1.500v.500h-2v-3h2v.500H18v-1c0-.550-.450-1-1-1h-3c-.550 0-1 .450-1 1v4c0 .550.450 1 1 1z"/></svg>
<svg class="abs" style="left:653.9px;top:589.9px" width="26.2" height="26.2" viewBox="0 0 24 24" fill="#e8eaed"><path d="M11.990 2C6.470 2 2 6.480 2 12s4.470 10 9.990 10C17.520 22 22 17.520 22 12S17.520 2 11.990 2zM12 20c-4.420 0-8-3.580-8-8s3.580-8 8-8 8 3.580 8 8-3.580 8-8 8zm3.500-9c.830 0 1.500-.670 1.500-1.500S16.330 8 15.500 8 14 8.670 14 9.500s.670 1.500 1.500 1.500zm-7 0c.830 0 1.500-.670 1.500-1.500S9.330 8 8.500 8 7 8.670 7 9.500 7.670 11 8.500 11zm3.500 6.500c2.330 0 4.310-1.460 5.110-3.500H6.890c.800 2.040 2.780 3.500 5.110 3.500z"/></svg>
<svg class="abs" style="left:719.0px;top:591.0px" width="24" height="24" viewBox="0 0 24 24" fill="#072f73"><rect x="2" y="4" width="20" height="16" rx="1.500" fill="none" stroke="#072f73" stroke-width="2"/><path d="M11 12.600H8L12 8.400l4 4.200H13v3.400h-2z"/></svg>
<svg class="abs" style="left:783.0px;top:591.0px" width="24" height="24" viewBox="0 0 24 24" fill="#e8eaed"><path d="M21 7c0-1.380-1.120-2.500-2.500-2.500-.170 0-.340.020-.500.050V4c0-1.380-1.120-2.500-2.500-2.500-.230 0-.460.030-.670.090C14.460.660 13.560 0 12.500 0c-1.230 0-2.250.890-2.460 2.060C9.870 2.020 9.690 2 9.500 2 8.120 2 7 3.120 7 4.500v5.890c-.340-.310-.760-.540-1.220-.660L5.010 9.520c-.830-.230-1.700.090-2.190.830-.380.570-.400 1.310-.150 1.950l2.560 6.430C6.490 21.910 9.570 24 12.980 24 17.410 24 21 20.410 21 15.980V7zm-2 8.980c0 3.320-2.700 6.020-6.020 6.020-2.590 0-4.940-1.590-5.900-4.010l-2.610-6.540.530.140c.460.120.830.460 1 .900L7 16h2V4.500c0-.280.220-.500.500-.500s.500.220.500.500V12h2V2.500c0-.280.220-.500.500-.500s.500.220.500.500V12h2V4c0-.280.220-.500.500-.500s.500.220.500.500v8h2V7c0-.280.220-.500.500-.500s.500.220.500.500v8.980z"/></svg>
<svg class="abs" style="left:837.0px;top:591.0px" width="24" height="24" viewBox="0 0 24 24" fill="#e8eaed"><path d="M12 8c1.100 0 2-.900 2-2s-.900-2-2-2-2 .900-2 2 .900 2 2 2zm0 2c-1.100 0-2 .900-2 2s.900 2 2 2 2-.900 2-2-.900-2-2-2zm0 6c-1.100 0-2 .900-2 2s.900 2 2 2 2-.900 2-2-.900-2-2-2z"/></svg>
<svg class="abs" style="left:899.0px;top:591.5px" width="24" height="24" viewBox="0 0 24 24" fill="#fff"><path d="M12 9c-1.600 0-3.150.250-4.600.720v3.100c0 .390-.230.740-.560.900-.980.490-1.870 1.120-2.660 1.850-.180.180-.430.280-.700.280-.280 0-.530-.110-.710-.290L.290 13.080c-.180-.170-.290-.420-.290-.700 0-.280.110-.530.290-.710C3.340 8.780 7.460 7 12 7s8.660 1.780 11.710 4.670c.180.180.290.430.290.710 0 .280-.110.530-.290.710l-2.480 2.480c-.180.180-.430.290-.710.290-.270 0-.520-.110-.700-.280-.790-.740-1.690-1.360-2.670-1.850-.330-.160-.560-.500-.560-.900v-3.100C15.150 9.250 13.600 9 12 9z"/></svg>
<svg class="abs" style="left:1042.2px;top:590.7px" width="25.2" height="25.2" viewBox="0 0 24 24" fill="#e8eaed" stroke="#e8eaed" stroke-width=".7"><path d="M11 7h2v2h-2zm0 4h2v6h-2zm1-9C6.480 2 2 6.480 2 12s4.480 10 10 10 10-4.480 10-10S17.520 2 12 2zm0 18c-4.410 0-8-3.590-8-8s3.590-8 8-8 8 3.590 8 8-3.590 8-8 8z"/></svg>
<svg class="abs" style="left:1089.5px;top:589.1px" width="27" height="27" viewBox="0 0 24 24" fill="#e8eaed" stroke="#e8eaed" stroke-width=".7"><path d="M9 13.750c-2.340 0-7 1.170-7 3.500V19h14v-1.750c0-2.330-4.660-3.500-7-3.500zM4.340 17c.840-.580 2.870-1.250 4.660-1.250s3.820.670 4.660 1.250H4.340zM9 12c1.930 0 3.500-1.570 3.500-3.500S10.930 5 9 5 5.500 6.570 5.500 8.500 7.070 12 9 12zm0-5c.830 0 1.500.670 1.500 1.500S9.830 10 9 10s-1.500-.670-1.500-1.500S8.170 7 9 7zm7.040 6.810c1.160.840 1.960 1.960 1.960 3.440V19h4v-1.750c0-2.020-3.500-3.170-5.960-3.440zM15 12c1.930 0 3.500-1.570 3.500-3.500S16.930 5 15 5c-.540 0-1.040.130-1.500.350.630.890 1 1.980 1 3.150s-.370 2.260-1 3.150c.460.220.960.350 1.500.350z"/></svg>
<svg class="abs" style="left:1138.7px;top:591.1px" width="25" height="25" viewBox="0 0 24 24" fill="#e8eaed" stroke="#e8eaed" stroke-width=".6"><path d="M4 4h16v12H5.170L4 17.170V4m0-2c-1.100 0-1.990.900-1.990 2L2 22l4-4h14c1.100 0 2-.900 2-2V4c0-1.100-.900-2-2-2H4zm2 10h8v2H6v-2zm0-3h12v2H6V9zm0-3h12v2H6V6z"/></svg>
<svg class="abs" style="left:1187.0px;top:590.8px" width="24.5" height="24.5" viewBox="0 0 24 24" fill="#e8eaed" stroke="#e8eaed" stroke-width=".7"><path d="M12 2l-5.500 9h11L12 2zm0 3.840L13.930 9h-3.870L12 5.840zM17.500 13c-2.490 0-4.500 2.010-4.500 4.500s2.010 4.500 4.500 4.500 4.500-2.010 4.500-4.500-2.010-4.500-4.500-4.500zm0 7c-1.380 0-2.500-1.120-2.500-2.500s1.120-2.500 2.500-2.500 2.500 1.120 2.500 2.500-1.120 2.500-2.500 2.500zM3 21.500h8v-8H3v8zm2-6h4v4H5v-4z"/></svg>
<svg class="abs" style="left:1234.5px;top:589.9px" width="25.5" height="25.5" viewBox="0 0 24 24" fill="#e8eaed"><path d="M8.500 8.500V6.500a3.500 3.500 0 0 1 7 0V8.500" fill="none" stroke="#e8eaed" stroke-width="2.300"/><path d="M19 12V10c0-.800-.700-1.500-1.500-1.500h-11C5.700 8.500 5 9.200 5 10v10c0 .800.700 1.500 1.500 1.500H12" fill="none" stroke="#e8eaed" stroke-width="2.300"/><circle cx="18" cy="18" r="4.800"/><circle cx="18" cy="16.300" r="1.300" fill="#202124"/><path d="M15.600 20.200c.500-1.100 1.400-1.600 2.400-1.600s1.900.500 2.400 1.600c-.600.700-1.500 1.100-2.400 1.100s-1.800-.400-2.400-1.100z" fill="#202124"/></svg>
<div class="abs" style="left:1103.500px;top:569.500px;width:21.500px;height:21.500px;border-radius:50%;background:#5f6368;color:#e8eaed;font-size:12px;font-weight:bold;line-height:21.500px;text-align:center">7</div>
<div class="abs" style="left:1156px;top:584.300px;width:8.400px;height:8.400px;border-radius:50%;background:#8ab4f8"></div>
<div class="abs" style="left:1283px;top:587px;width:1px;height:31px;background:#9aa0a6"></div>
<svg class="abs" style="left:1296px;top:583px" width="40" height="40" viewBox="0 0 40 40"><circle cx="20" cy="20" r="20" fill="#7598cf"/><path d="M20 20V0A20 20 0 0 0 2.700 30z" fill="#8ab4f8"/><g transform="translate(8,7) scale(1)" fill="#0a2f6e" stroke="#0a2f6e" stroke-width=".4"><path d="M22 5.720l-4.600-3.860-1.290 1.530 4.600 3.860L22 5.720zM7.880 3.390L6.600 1.860 2 5.710l1.290 1.530 4.590-3.850zM12.500 8H11v6l4.750 2.850.750-1.230-4-2.370V8zM12 4c-4.970 0-9 4.030-9 9s4.020 9 9 9c4.970 0 9-4.030 9-9s-4.030-9-9-9zm0 16c-3.870 0-7-3.130-7-7s3.130-7 7-7 7 3.130 7 7-3.130 7-7 7z"/></g></svg>
<div class="abs" style="left:1299.500px;top:543.500px;width:60px;height:35px;border-radius:17.500px 0 0 17.500px;background:#fff"></div>
<svg class="abs" style="left:1307px;top:547px" width="28" height="28" viewBox="0 0 28 28"><defs><linearGradient id="mg" x1="0" y1="0" x2="1" y2="1"><stop offset="0" stop-color="#a020f0"/><stop offset=".5" stop-color="#5b3df5"/><stop offset="1" stop-color="#18b6f0"/></linearGradient></defs><circle cx="14" cy="14" r="10.500" fill="#fff" stroke="url(#mg)" stroke-width="3.400"/><rect x="9" y="11.300" width="2.300" height="5" rx="1.100" fill="#1b1464"/><path d="M19.600 11.200l-3.800 2.600 3.800 2.600" fill="none" stroke="#1b1464" stroke-width="1.900" stroke-linecap="round" stroke-linejoin="round"/></svg>
<div class="abs" style="left:1308px;top:455px;width:36.500px;height:36.500px;border-radius:50%;background:#fff"></div>
<svg class="abs" style="left:1316.500px;top:463.500px" width="19" height="19" viewBox="0 0 19 19" fill="none" stroke="#3c4043" stroke-width="1.500" stroke-linecap="round" stroke-linejoin="round"><path d="M2.500 3.500h7M6 2v1.500M3.500 3.500c.700 2.300 2.500 4 5 5M8.500 3.500c-.700 2.300-2.500 4-5 5"/><path d="M9.500 17l3.300-8 3.300 8M10.700 14.500h4.200"/><path d="M12.500 2.500c2 0 3.500 1.200 3.500 3.200M6.500 16.500c-2 0-3.500-1.200-3.500-3.200"/></svg>
<div class="abs" style="left:1308px;top:498.700px;width:36.500px;height:36.500px;border-radius:50%;background:#fff"></div>
<svg class="abs" style="left:1315.500px;top:508px" width="22" height="22" viewBox="0 0 23 23"><g fill="none" stroke="#5f6368" stroke-width="1.500"><rect x="2" y="2" width="6" height="6.500" rx="2.600"/><rect x="11" y="2" width="6" height="6.500" rx="2.600"/><rect x="2" y="11.500" width="6" height="6.500" rx="2.600"/></g><rect x="10.500" y="12" width="8" height="8" rx="1.200" fill="#4285f4"/><path d="M10.500 12h4v8h-4z" fill="#fbbc04"/><path d="M10.500 16h8v4h-8z" fill="#34a853"/><path d="M10.500 12h8v3h-8z" fill="#ea4335" opacity=".9"/><rect x="12" y="13.700" width="4.400" height="4.600" fill="#fff"/><path d="M18.500 14l3-2.200v8.400l-3-2.200z" fill="#00ac47"/></svg>
<!--bar_END-->
</body>
</html>
